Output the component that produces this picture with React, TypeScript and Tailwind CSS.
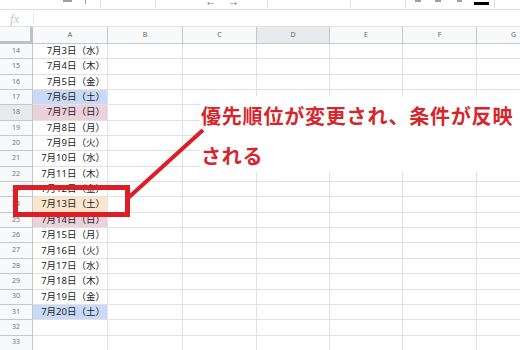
import React from "react";

const rows: { n: number; t: string; bg?: string }[] = [
  { n: 14, t: "7月3日（水）" },
  { n: 15, t: "7月4日（木）" },
  { n: 16, t: "7月5日（金）" },
  { n: 17, t: "7月6日（土）", bg: "bg-[#c9daf8]" },
  { n: 18, t: "7月7日（日）", bg: "bg-[#ead1dc]" },
  { n: 19, t: "7月8日（月）" },
  { n: 20, t: "7月9日（火）" },
  { n: 21, t: "7月10日（水）" },
  { n: 22, t: "7月11日（木）" },
  { n: 23, t: "7月12日（金）" },
  { n: 24, t: "7月13日（土）", bg: "bg-[#fce5cd]" },
  { n: 25, t: "7月14日（日）", bg: "bg-[#ead1dc]" },
  { n: 26, t: "7月15日（月）" },
  { n: 27, t: "7月16日（火）" },
  { n: 28, t: "7月17日（水）" },
  { n: 29, t: "7月18日（木）" },
  { n: 30, t: "7月19日（金）" },
  { n: 31, t: "7月20日（土）", bg: "bg-[#c9daf8]" },
  { n: 32, t: "" },
  { n: 33, t: "" },
];

const cols = [
  { l: "B", w: "w-[75px]" },
  { l: "C", w: "w-[74px]" },
  { l: "D", w: "w-[73px]" },
  { l: "E", w: "w-[73px]" },
  { l: "F", w: "w-[74px]" },
  { l: "G", w: "w-[74px]" },
];

function Sep() {
  return <div className="w-[1px] h-[8px] bg-[#e0e0e0] shrink-0" />;
}

export default function App() {
  return (
    <div
      className="relative w-[520px] h-[350px] overflow-hidden bg-white"
      style={{ fontFamily: '"Noto Sans", "Noto Sans CJK JP", sans-serif' }}
    >
      {/* toolbar strip (cut off) */}
      <div className="flex items-start h-[10px] border-b border-[#dadce0] bg-white text-[7px] leading-none text-[#777]">
        <div className="ml-[63px] w-[9px] h-[2px] bg-[#9aa0a6]" />
        <div className="ml-[13px] w-[1px] h-[4px] bg-[#9aa0a6]" />
        <div className="ml-[14px]"><Sep /></div>
        <div className="ml-[54px]"><Sep /></div>
        <div className="ml-[51px]">←</div>
        <div className="ml-[16px]">→</div>
        <div className="ml-[30px]"><Sep /></div>
        <div className="ml-[82px]"><Sep /></div>
        <div className="ml-[54px]"><Sep /></div>
        <div className="ml-[9px] w-[6px] h-[2px] bg-[#9aa0a6]" />
        <div className="ml-[14px] w-[6px] h-[2px] bg-[#9aa0a6]" />
        <div className="ml-[16px] w-[5px] h-[2px] bg-[#9aa0a6]" />
        <div className="ml-[12px] mt-[2px] w-[15px] h-[3px] bg-black" />
        <div className="ml-[5px]"><Sep /></div>
      </div>
      {/* formula bar */}
      <div className="flex items-center h-[17px] border-b border-[#e2e3e3]">
        <div
          className="w-[33px] pl-[10px] text-[13px] italic leading-none text-[#c6c6c6]"
          style={{ fontFamily: '"Liberation Serif", serif' }}
        >
          fx
        </div>
        <div className="w-[1px] h-[10px] bg-[#e2e3e3]" />
      </div>
      {/* column header */}
      <div className="flex h-[17px] text-[7px] text-[#666]">
        <div className="w-[33px] shrink-0 bg-[#f8f9fa] border-r-[3px] border-b-[3px] border-[#c0c0c0]" />
        <div className="w-[75px] shrink-0 flex items-center justify-center bg-[#f8f9fa] border-r border-b border-[#c7c7c7]">
          A
        </div>
        {cols.map((c) => (
          <div
            key={c.l}
            className={`${c.w} shrink-0 flex items-center justify-center border-r border-b border-[#c7c7c7] ${
              c.l === "D" ? "bg-[#e8eaed]" : "bg-[#f8f9fa]"
            }`}
          >
            {c.l}
          </div>
        ))}
      </div>
      {/* rows */}
      {rows.map((r) => (
        <div key={r.n} className="flex h-[15.35px]">
          <div
            className={`w-[33px] shrink-0 flex items-center justify-center text-[7px] text-[#777] border-r border-b border-[#c7c7c7] ${
              r.n === 18 ? "bg-[#e8eaed]" : "bg-[#f8f9fa]"
            }`}
          >
            {r.n}
          </div>
          <div
            className={`w-[75px] shrink-0 flex items-center justify-end pr-[2px] text-[9.5px] text-[#222] border-r border-b border-[#e2e2e2] whitespace-nowrap ${
              r.bg ?? "bg-white"
            }`}
          >
            {r.t}
          </div>
          {cols.map((c) => (
            <div key={c.l} className={`${c.w} shrink-0 border-r border-b border-[#e2e2e2]`} />
          ))}
        </div>
      ))}

      {/* annotation overlay */}
      <svg className="absolute left-0 top-0" width="520" height="350">
        <rect x="200" y="96" width="320" height="76" fill="#ffffff" />
        <rect x="15.5" y="187.5" width="112" height="27" fill="none" stroke="#dc1f26" strokeWidth="5" />
        <line x1="127" y1="199" x2="203" y2="130" stroke="#dc1f26" strokeWidth="4" />
      </svg>
      <div
        className="absolute left-[201px] top-[96px] text-[20px] font-bold text-[#d7262b] leading-[40px] tracking-[0.8px] whitespace-nowrap"
        style={{ fontFamily: '"Noto Sans CJK JP", sans-serif' }}
      >
        <div>優先順位が変更され、条件が反映</div>
        <div>される</div>
      </div>
    </div>
  );
}
